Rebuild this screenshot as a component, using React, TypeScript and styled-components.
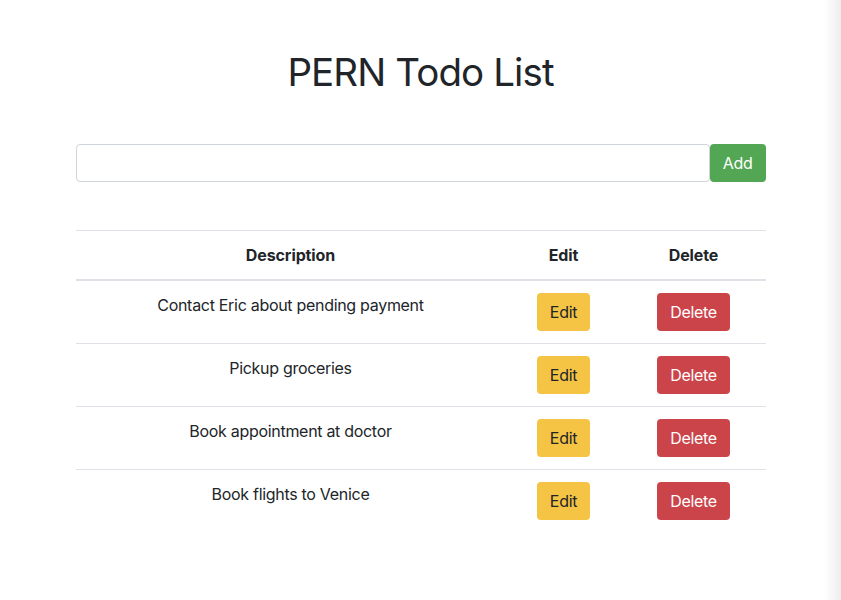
import React from "react";
import styled, { createGlobalStyle } from "styled-components";

const Global = createGlobalStyle`
  html, body { margin: 0; padding: 0; }
  body {
    font-family: Inter, "Noto Sans", "Liberation Sans", sans-serif;
    font-size: 16px;
    line-height: 1.5;
    letter-spacing: -0.3px;
    color: #212529;
    background: linear-gradient(to right, #ffffff 0, #ffffff 824px, #f3f3f3 836px, #ededed 841px);
    min-height: 600px;
  }
  * { box-sizing: border-box; }
`;

const Container = styled.div`
  width: 720px;
  margin: 0 auto;
  padding: 0 15px;
`;

const Title = styled.h1`
  margin: 48px 0 0;
  font-size: 38.5px;
  font-weight: 400;
  line-height: 48px;
  text-align: center;
  letter-spacing: -0.9px;
`;

const Form = styled.form`
  display: flex;
  margin-top: 48px;
`;

const Input = styled.input`
  flex: 1;
  height: 38px;
  padding: 6px 12px;
  font: inherit;
  border: 1px solid #ced4da;
  border-radius: 4px;
  background: #fff;
  outline: none;
`;

const Button = styled.button<{ $variant: "success" | "warning" | "danger" }>`
  height: 38px;
  padding: 6px 12px;
  font: inherit;
  font-size: 16px;
  line-height: 24px;
  letter-spacing: -0.3px;
  border: 1px solid transparent;
  border-radius: 4px;
  cursor: pointer;
  background: ${(p) =>
    p.$variant === "success" ? "#53a653" : p.$variant === "warning" ? "#f5c444" : "#cb444a"};
  color: ${(p) => (p.$variant === "warning" ? "#212529" : "#ffffff")};
`;

const Table = styled.table`
  width: 100%;
  margin-top: 48px;
  border-collapse: collapse;
  text-align: center;
`;

const Th = styled.th`
  padding: 12px;
  font-weight: 700;
  letter-spacing: -0.1px;
  border-top: 1px solid #dee2e6;
  border-bottom: 2px solid #dee2e6;
  vertical-align: bottom;
`;

const Td = styled.td`
  padding: 12px;
  border-top: 1px solid #dee2e6;
  vertical-align: top;
`;

const todos = [
  "Contact Eric about pending payment",
  "Pickup groceries",
  "Book appointment at doctor",
  "Book flights to Venice",
];

export default function App() {
  return (
    <>
      <Global />
      <Container>
        <Title>PERN Todo List</Title>
        <Form onSubmit={(e) => e.preventDefault()}>
          <Input type="text" />
          <Button $variant="success">Add</Button>
        </Form>
        <Table>
          <colgroup>
            <col style={{ width: 430 }} />
            <col style={{ width: 116 }} />
            <col style={{ width: 144 }} />
          </colgroup>
          <thead>
            <tr>
              <Th>Description</Th>
              <Th>Edit</Th>
              <Th>Delete</Th>
            </tr>
          </thead>
          <tbody>
            {todos.map((t) => (
              <tr key={t}>
                <Td>{t}</Td>
                <Td>
                  <Button $variant="warning">Edit</Button>
                </Td>
                <Td>
                  <Button $variant="danger">Delete</Button>
                </Td>
              </tr>
            ))}
          </tbody>
        </Table>
      </Container>
    </>
  );
}
